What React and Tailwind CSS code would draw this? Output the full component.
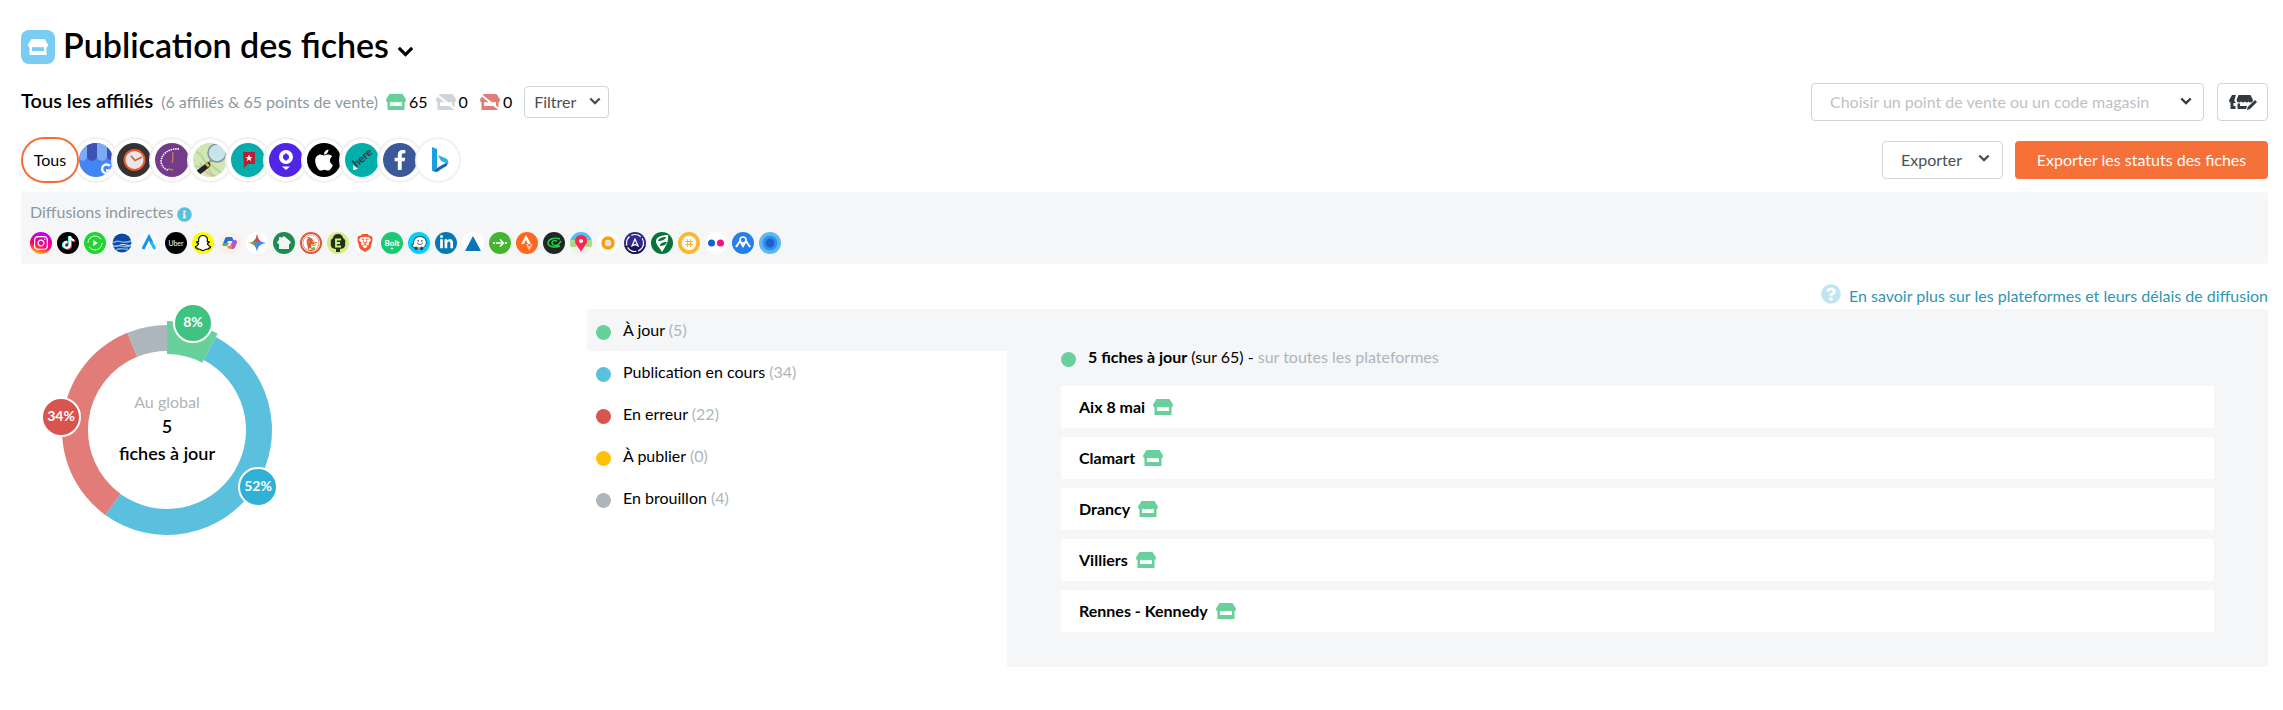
import React, { useState } from 'react';
import {
  FaApple,
  FaFacebookF,
  FaInfoCircle,
  FaInstagram,
  FaLinkedinIn,
  FaQuestionCircle,
  FaSnapchatGhost,
  FaTiktok,
  FaWaze,
} from 'react-icons/fa';
import { SiBrave, SiDuckduckgo } from 'react-icons/si';

const STATUSES = [
  { id: 'live', label: 'À jour', count: 5, dot: 'bg-[#68d09b]' },
  { id: 'pending', label: 'Publication en cours', count: 34, dot: 'bg-[#5bc0de]' },
  { id: 'error', label: 'En erreur', count: 22, dot: 'bg-[#d9534f]' },
  { id: 'todo', label: 'À publier', count: 0, dot: 'bg-[#ffc107]' },
  { id: 'draft', label: 'En brouillon', count: 4, dot: 'bg-[#adb5bd]' },
];

const STORES = ['Aix 8 mai', 'Clamart', 'Drancy', 'Villiers', 'Rennes - Kennedy'];

const SLICES = [
  { value: 34, start: 5, color: '#5bc0de' },
  { value: 22, start: 39, color: '#e27c79' },
  { value: 4, start: 61, color: '#adb5bd' },
  { value: 5, start: 0, color: '#68d09b', active: true },
];

const BADGES = [
  { label: '8%', x: 156, y: 22, color: '#3fc380' },
  { label: '52%', x: 221, y: 186, color: '#31b0d5' },
  { label: '34%', x: 24, y: 116, color: '#d9534f' },
];

function Chevron({ className }) {
  return (
    <svg viewBox="0 0 14 9" className={className} fill="none" stroke="currentColor" strokeWidth="2.6" aria-hidden="true">
      <path d="M1.500 1.500 7 7l5.500-5.500" />
    </svg>
  );
}

function ShopIcon({ className, off }) {
  return (
    <svg viewBox="0 0 20 16" className={className} fill="currentColor" aria-hidden="true">
      <path d="M3.500 0h13L20 5.600c0 1.600-.7 2.500-1.500 2.900V16h-17V8.500C.7 8.100 0 7.200 0 5.600zM4 8.600V12h12V8.600l-1.500-.9-1.500.9-1.500-.9-1.500.9-1.500-.9L7 8.600l-1.500-.9z" fillRule="evenodd" />
      {off && <path d="M0 0 20 16" stroke="#fff" strokeWidth="2" />}
    </svg>
  );
}

function ShopEditIcon() {
  return (
    <svg viewBox="0 0 28 15" className="h-[15px] w-7" fill="currentColor" aria-hidden="true">
      <path d="M3 0h4L5.500 4.500c-.3 1.400.2 2.200 1 2.600v1H4.500V11h2v3h-5V7.500C.3 7.100-.2 6 .2 5z" />
      <path d="M9.500 0h12l2.300 4.500c.4 1.600-.4 3-2 3-1 0-1.600-.4-2.100-1-1 1.300-2.700 1.300-3.700 0-1 1.300-2.700 1.300-3.700 0-1.200 1.500-5.300 1.300-4.600-2z" />
      <path d="M8.500 8.500H11V11h7l-1 3H8.500zM26 5l2 2-7 7-3 1 .7-3z" />
    </svg>
  );
}

const PLATFORMS = [
  {
    name: 'Google Business Profile',
    art: (
      <>
        <path fill="#4285f4" d="M0 0h34v34H0z" />
        <path fill="#7baaf7" d="M0 0h8v13a4.500 4.500 0 0 1-8 3zM18 0h10v13a5 5 0 0 1-10 0z" />
        <path fill="#3f51b5" d="M8 0h10v13a5 5 0 0 1-10 0zM28 0h6v17a4.500 4.500 0 0 1-6-4z" />
        <path d="M31 23a4.500 4.500 0 1 0 .8 4.500H27" fill="none" stroke="#fff" strokeWidth="2.400" />
      </>
    ),
  },
  {
    name: 'Horaires',
    art: (
      <>
        <path fill="#333" d="M0 0h34v34H0z" />
        <circle cx="17.500" cy="17" r="10" fill="#e6e9eb" stroke="#f0552b" strokeWidth="2" />
        <path d="m14 13 4 4.500 7-3.500" fill="none" stroke="#e4572e" strokeWidth="1.600" />
      </>
    ),
  },
  {
    name: 'Petit Futé',
    art: (
      <>
        <path fill="#743b8b" d="M0 0h34v34H0z" />
        <path d="M24 6C14 5 6 11 6 19c1 4 3 7 7 8" fill="none" stroke="#fff" strokeWidth="1.600" strokeDasharray="1.500 .8" />
        <path d="M18 9c-1 4 1 7-1 11M13 26l5 1" fill="none" stroke="#c3844d" strokeWidth="1.300" />
      </>
    ),
  },
  {
    name: 'OpenStreetMap',
    art: (
      <>
        <path fill="#cfe6b5" d="M0 0h34v34H0z" />
        <path d="M3 9c7 1 5 7 10 10s9 5 17 13M0 23l15 2 5 9M4 32 24 14" fill="none" stroke="#b8d69a" strokeWidth="2" />
        <path d="m7 20 7 10 10 4" fill="none" stroke="#e4b0a0" strokeWidth="1.500" />
        <circle cx="24" cy="10" r="9" fill="#c6e4e9" stroke="#84949b" strokeWidth="1.500" />
        <path d="M18 17 14 22" stroke="#8a9399" strokeWidth="2" />
        <path d="m15 22-9 7" stroke="#222" strokeWidth="5" strokeLinecap="round" />
        <path d="m15.500 21-2 2" stroke="#d9ba45" strokeWidth="4" />
      </>
    ),
  },
  {
    name: 'Mappy',
    art: (
      <>
        <path fill="#05adad" d="M0 0h34v34H0z" />
        <path fill="#b52033" d="M12 9h12v12h-7l-4 4z" />
        <path fill="#fff" d="m18 11.500 1 2.500h2.500l-2 1.600.8 2.600-2.300-1.600-2.300 1.600.8-2.600-2-1.600H17z" />
      </>
    ),
  },
  {
    name: 'GoWork',
    art: (
      <>
        <path fill="#5125e8" d="M0 0h34v34H0z" />
        <circle cx="17" cy="14" r="5" fill="none" stroke="#fff" strokeWidth="4" />
        <path d="M17 10.500v7" stroke="#5125e8" strokeWidth="2" />
        <path d="M13 23.500h8l-4 3.500z" fill="#fff" />
      </>
    ),
  },
  {
    name: 'Apple',
    art: (
      <>
        <path d="M0 0h34v34H0z" />
        <FaApple x="5" y="5" size="24" color="#fff" />
      </>
    ),
  },
  {
    name: 'Here',
    art: (
      <>
        <path fill="#00afaa" d="M0 0h34v34H0z" />
        <path fill="#fff" d="m8 22 5 4-5 1z" />
        <text x="10" y="24" transform="rotate(-42 12 22)" fill="#383c45" fontFamily="Lato, sans-serif" fontWeight="900" fontSize="11">
          here
        </text>
      </>
    ),
  },
  {
    name: 'Facebook',
    art: (
      <>
        <path fill="#3b5998" d="M0 0h34v34H0z" />
        <FaFacebookF x="7" y="7" size="20" color="#fff" />
      </>
    ),
  },
  {
    name: 'Bing',
    art: (
      <>
        <path fill="#fff" d="M0 0h34v34H0z" />
        <path fill="#1ba1e2" d="m11 4 5 2v19l-5 3z" />
        <path fill="#1668b8" d="m11 28 5-3 5-3 6-3c0 3-2 5-5 6l-6 4z" />
        <path fill="#2bb3d8" d="m17 12 7 3c3 1 4 4 3 6l-7-3z" />
      </>
    ),
  },
];

const INDIRECT = [
  {
    name: 'Instagram',
    art: (
      <>
        <defs>
          <linearGradient id="insta" x1="0.300" y1="1" x2="0.600" y2="0">
            <stop offset="0" stopColor="#ffc300" />
            <stop offset=".4" stopColor="#ff0069" />
            <stop offset="1" stopColor="#b900f5" />
          </linearGradient>
        </defs>
        <path fill="url(#insta)" d="M0 0h22v22H0z" />
        <FaInstagram x="3" y="3" size="16" color="#fff" />
      </>
    ),
  },
  {
    name: 'TikTok',
    art: (
      <>
        <path d="M0 0h22v22H0z" />
        <FaTiktok x="4" y="4" size="13" color="#25f4ee" />
        <FaTiktok x="6" y="5" size="13" color="#fe2c55" />
        <FaTiktok x="5" y="4" size="13" color="#fff" />
      </>
    ),
  },
  {
    name: 'Lecture',
    art: (
      <>
        <path fill="#20d52d" d="M0 0h22v22H0z" />
        <circle cx="11" cy="11" r="7" fill="none" stroke="#fff" strokeWidth="1" strokeDasharray="18 4" />
        <path fill="#fff" d="m9 8 5 3-5 3z" />
      </>
    ),
  },
  {
    name: 'Amazone Maps',
    art: (
      <>
        <path fill="#fff" d="M0 0h22v22H0z" />
        <circle cx="11" cy="11" r="9.500" fill="#1147a0" />
        <path fill="#fff" d="M1 13c5 2 8-1 11-1s5 2 9 0v1c-4 2-6 0-9 0s-6 3-11 1z" />
        <path d="M2 11c5-5 9 2 18-2M3 15c5-4 8 2 16-1M5 18c4-3 8 0 12-1" fill="none" stroke="#76b5ea" strokeWidth="1.400" />
      </>
    ),
  },
  {
    name: 'Alexa',
    art: (
      <>
        <path fill="#f8f9fa" d="M0 0h22v22H0z" />
        <path d="M5 17 11 5l3 6" fill="none" stroke="#1592ea" strokeWidth="3" />
        <path d="m13 10 4 7" stroke="#17bdf3" strokeWidth="3" />
      </>
    ),
  },
  {
    name: 'Uber',
    art: (
      <>
        <path d="M0 0h22v22H0z" />
        <text x="11" y="14" textAnchor="middle" fill="#fff" fontFamily="Lato, sans-serif" fontSize="7">
          Uber
        </text>
      </>
    ),
  },
  {
    name: 'Snapchat',
    art: (
      <>
        <path fill="#fffc00" d="M0 0h22v22H0z" />
        <FaSnapchatGhost x="3" y="3" size="16" color="#fff" stroke="#000" strokeWidth="36" />
      </>
    ),
  },
  {
    name: 'Copilot',
    art: (
      <>
        <path fill="#faf0ea" d="M0 0h22v22H0z" />
        <path fill="#2870d8" d="M8 5h5l2 4H9l-2 5H5c-2 0-1-3 0-5s1-4 3-4z" />
        <path fill="#4bb864" d="M4 11h6l-2 3H5c-1 0-2-1-1-3z" />
        <path fill="#b057cf" d="M14 8h2c3 0 2 3 1 5s-1 4-4 4l-3-1z" />
        <path fill="#f4813f" d="M8 14h3l3-3-1 4c-1 2-3 2-4 1z" />
      </>
    ),
  },
  {
    name: 'Gemini',
    art: (
      <>
        <defs>
          <linearGradient id="gemini" x1="0" y1="0" x2="1" y2="0">
            <stop offset="0" stopColor="#f6b821" />
            <stop offset=".35" stopColor="#5aa06a" />
            <stop offset=".55" stopColor="#4286f5" />
            <stop offset="1" stopColor="#4286f5" />
          </linearGradient>
        </defs>
        <path fill="#fff" d="M0 0h22v22H0z" />
        <path fill="url(#gemini)" d="M11 2c1 6 3 8 9 9-6 1-8 3-9 9-1-6-3-8-9-9 6-1 8-3 9-9z" />
        <path fill="#ea4335" d="M11 2c.7 3.600 1.600 5.600 3 7l-5 1-1.500-.6C9.600 8.200 10.400 6 11 2z" />
      </>
    ),
  },
  {
    name: 'Maison',
    art: (
      <>
        <path fill="#1f8a53" d="M0 0h22v22H0z" />
        <path fill="#f4f5f7" d="m11 4 7 6-1 2h-1v5H6v-5H5l-1-2 2-2V5h2v1z" />
      </>
    ),
  },
  {
    name: 'DuckDuckGo',
    art: (
      <>
        <path fill="#de5833" d="M0 0h22v22H0z" />
        <SiDuckduckgo x="2" y="2" size="18" color="#fff" />
        <path fill="#65bc46" d="m11 16 4-1v3l-4-1z" />
        <path fill="#fdd20a" d="M11 12h4l-1 1h-3z" />
      </>
    ),
  },
  {
    name: 'Ecosia',
    art: (
      <>
        <path fill="#d7eb80" d="M0 0h22v22H0z" />
        <path fill="#1f3318" d="M11 2c3 0 5 2 5 4 2 1 3 3 2 5 1 3-1 6-5 6v3H9v-3c-4 0-6-3-5-6-1-2 0-4 2-5 0-2 2-4 5-4z" />
        <path d="M14 7.500H9v7h5M9 11h4" fill="none" stroke="#d7eb80" strokeWidth="1.800" />
      </>
    ),
  },
  {
    name: 'Brave',
    art: (
      <>
        <path fill="#fff" d="M0 0h22v22H0z" />
        <SiBrave x="2" y="2" size="18" color="#fb542b" />
      </>
    ),
  },
  {
    name: 'Bolt',
    art: (
      <>
        <path fill="#1dc872" d="M0 0h22v22H0z" />
        <text x="11" y="14" textAnchor="middle" fill="#fff" fontFamily="Lato, sans-serif" fontWeight="900" fontSize="8">
          Bolt
        </text>
        <circle cx="11" cy="16.500" r="1" fill="#fff" />
      </>
    ),
  },
  {
    name: 'Waze',
    art: (
      <>
        <path fill="#05d0fc" d="M0 0h22v22H0z" />
        <path fill="#fff" d="M12 5c4 0 6 3 6 6s-3 6-6 6c-4 0-7-1-8-4 2 0 2-1 2-3 0-3 3-5 6-5z" />
        <FaWaze x="3" y="3" size="16" color="#28404d" />
      </>
    ),
  },
  {
    name: 'LinkedIn',
    art: (
      <>
        <path fill="#0878b5" d="M0 0h22v22H0z" />
        <FaLinkedinIn x="4" y="3" size="15" color="#fff" />
      </>
    ),
  },
  {
    name: 'Navigation',
    art: (
      <>
        <path fill="#fff" d="M0 0h22v22H0z" />
        <path fill="#0875bd" d="m11 4 8 15H3z" />
      </>
    ),
  },
  {
    name: 'Citymapper',
    art: (
      <>
        <path fill="#43b52f" d="M0 0h22v22H0z" />
        <path d="M7 11h7M11 7.500l3.500 3.500-3.500 3.500" fill="none" stroke="#fff" strokeWidth="1.600" />
        <path fill="#fff" d="M4 10h2v2H4zM16 10h2v2h-2z" />
      </>
    ),
  },
  {
    name: 'Strava',
    art: (
      <>
        <path fill="#ff6820" d="M0 0h22v22H0z" />
        <path fill="#fff" d="m10 3 5 9h-3l-2-4-2 4H5z" />
        <path fill="#ffc19f" d="M10 12h2l1 3 2-3h2l-4 7z" />
      </>
    ),
  },
  {
    name: 'Careem',
    art: (
      <>
        <path fill="#222725" d="M0 0h22v22H0z" />
        <path d="M17 7c-5-2-12 0-12 4s7 5 12 3M14 9c-3-1-5 0-5 2s3 3 6 2l3-4" fill="none" stroke="#2bd34b" strokeWidth="1.400" />
      </>
    ),
  },
  {
    name: 'Plans',
    art: (
      <>
        <path fill="#f1eee8" d="M0 0h22v22H0z" />
        <path fill="#54bdf5" d="M0 0h22v8H0z" />
        <path fill="#a9da86" d="M0 8h6v7H0zM16 8h6v7h-6z" />
        <path fill="#fb2751" d="M11 3c4 0 6 3 6 6 0 4-4 6-6 11C9 15 5 13 5 9c0-3 2-6 6-6z" />
        <circle cx="11" cy="9" r="2" fill="#fff" />
      </>
    ),
  },
  {
    name: 'Magic Earth',
    art: (
      <>
        <path fill="#fff" d="M0 0h22v22H0z" />
        <circle cx="11" cy="11" r="5" fill="#e1e3e8" stroke="#faa008" strokeWidth="3.500" />
      </>
    ),
  },
  {
    name: 'Organic Nav',
    art: (
      <>
        <path fill="#30288a" d="M0 0h22v22H0z" />
        <path fill="#1b1658" d="M0 14h22v8H0z" />
        <circle cx="11" cy="11" r="8.500" fill="none" stroke="#fff" strokeWidth="1.200" strokeDasharray="10 2" />
        <path d="m11 7-3 7 3-1.500 3 1.500z" fill="none" stroke="#fff" strokeWidth="1.200" />
      </>
    ),
  },
  {
    name: 'HappyCow',
    art: (
      <>
        <path fill="#087238" d="M0 0h22v22H0z" />
        <path fill="#fff" d="M5 9c0-4 6-6 12-6 1 6-2 11-6 17-2-4-6-7-6-11z" />
        <path fill="#087238" d="M7 9c1-3 4-4 8-4-1 3-4 4-8 4zM9 14c0-3 3-4 7-4-1 3-4 4-7 4z" />
      </>
    ),
  },
  {
    name: 'What3',
    art: (
      <>
        <path fill="#fdb62f" d="M0 0h22v22H0z" />
        <circle cx="11" cy="11" r="7" fill="#fff" stroke="#fff" strokeWidth="1" strokeDasharray="1 1" />
        <path d="M9.500 7v8M12.500 7v8M7 9.500h8M7 12.500h8" stroke="#fdb62f" />
      </>
    ),
  },
  {
    name: 'Flickr',
    art: (
      <>
        <path fill="#fff" d="M0 0h22v22H0z" />
        <circle cx="6.500" cy="11" r="3.500" fill="#0d63dc" />
        <circle cx="15.500" cy="11" r="3.500" fill="#ff0a85" />
      </>
    ),
  },
  {
    name: 'Mapstr',
    art: (
      <>
        <path fill="#2580ec" d="M0 0h22v22H0z" />
        <path d="m4 15 4-6 3 5 3-5 4 6" fill="none" stroke="#fff" strokeWidth="2" />
        <circle cx="11" cy="8" r="3" fill="none" stroke="#fff" strokeWidth="1.500" />
      </>
    ),
  },
  {
    name: 'Cible',
    art: (
      <>
        <path fill="#5bb9f5" d="M0 0h22v22H0z" />
        <circle cx="11" cy="11" r="7.500" fill="#358ee9" />
        <circle cx="11" cy="11" r="4.500" fill="#1c62cc" />
      </>
    ),
  },
];

function point(value, radius) {
  const a = (value / 65) * Math.PI * 2;
  return `${130 + radius * Math.sin(a)} ${129 - radius * Math.cos(a)}`;
}

function arc({ start, value, active }) {
  const outer = active ? 109 : 105;
  const inner = active ? 76 : 79;
  const end = start + value;
  const large = value > 32 ? 1 : 0;
  return `M${point(start, outer)}A${outer} ${outer} 0 ${large} 1 ${point(end, outer)}L${point(end, inner)}A${inner} ${inner} 0 ${large} 0 ${point(start, inner)}Z`;
}

function Donut() {
  return (
    <svg viewBox="0 0 260 240" className="-mt-2 ml-4 h-60 w-[260px]" role="img" aria-label="Répartition des fiches">
      {SLICES.map((s) => (
        <path key={s.color} d={arc(s)} fill={s.color} />
      ))}
      <g textAnchor="middle">
        <text x="130" y="107" className="fill-[#adb5bd] text-base">Au global</text>
        <text x="130" y="132" className="text-lg font-semibold">5</text>
        <text x="130" y="159" className="text-lg font-semibold">fiches à jour</text>
        {BADGES.map((b) => (
          <g key={b.label}>
            <circle cx={b.x} cy={b.y} r="19" fill={b.color} stroke="#fff" strokeWidth="2" />
            <text x={b.x} y={b.y + 4} className="fill-white text-sm font-bold">{b.label}</text>
          </g>
        ))}
      </g>
    </svg>
  );
}

export default function App() {
  const [status, setStatus] = useState('live');

  return (
    <main className="bg-white pt-[30px] pr-[15px] pb-10 pl-[21px] font-[Lato,sans-serif] text-base text-black">
      <header className="flex h-[34px] items-center">
        <span className="flex size-[34px] items-center justify-center rounded-lg bg-[#79ccf2] text-white">
          <ShopIcon className="h-4 w-5" />
        </span>
        <h1 className="mb-1 ml-2 text-[34px] leading-none font-semibold">Publication des fiches</h1>
        <button type="button" aria-label="Changer de page" className="mt-2 ml-2">
          <Chevron className="h-[11px] w-[17px]" />
        </button>
      </header>

      <div className="mt-[19px] flex items-center justify-between">
        <div className="flex items-center">
          <h2 className="mb-1 text-xl leading-6 font-semibold">Tous les affiliés</h2>
          <span className="ml-2 text-[#8e979f]">(6 affiliés &amp; 65 points de vente)</span>
          <ShopIcon className="ml-2 h-4 w-5 text-[#68d09b]" />
          <span className="ml-[3px]">65</span>
          <ShopIcon off className="ml-2 h-4 w-5 text-[#ced4da]" />
          <span className="ml-[3px]">0</span>
          <ShopIcon off className="ml-3 h-4 w-5 text-[#e27c79]" />
          <span className="ml-[3px]">0</span>
          <div className="relative ml-3 text-[#495057]">
            <select aria-label="Filtrer" className="h-8 w-[85px] appearance-none rounded border border-[#ced4da] bg-white pl-[9px]">
              <option>Filtrer</option>
            </select>
            <Chevron className="pointer-events-none absolute top-[11px] right-2 h-2 w-3" />
          </div>
        </div>
        <div className="flex gap-[13px] text-[#343a40]">
          <div className="relative">
            <select aria-label="Point de vente" className="h-[38px] w-[393px] appearance-none rounded border border-[#ced4da] bg-white pl-[18px] text-[#bfc1c4]">
              <option>Choisir un point de vente ou un code magasin</option>
            </select>
            <Chevron className="pointer-events-none absolute top-[14px] right-3 h-2 w-3" />
          </div>
          <button type="button" aria-label="Modifier les points de vente" className="flex h-[38px] w-[51px] items-center justify-center rounded border border-[#ced4da]">
            <ShopEditIcon />
          </button>
        </div>
      </div>

      <div className="mt-4 flex items-center justify-between">
        <div className="flex">
          <button type="button" className="z-10 h-[46px] w-[58px] rounded-full border-2 border-[#f47038] bg-white">
            Tous
          </button>
          <div className="-ml-[6px] flex -space-x-2">
            {PLATFORMS.map((p) => (
              <button key={p.name} type="button" aria-label={p.name} className="flex size-[46px] items-center justify-center rounded-full border-2 border-[#f1f1f1] bg-white">
                <svg viewBox="0 0 34 34" className="size-[34px] shrink-0 rounded-full">{p.art}</svg>
              </button>
            ))}
          </div>
        </div>
        <div className="flex gap-3">
          <button type="button" aria-haspopup="menu" className="flex h-[38px] w-[121px] items-center justify-between rounded border border-[#ced4da] pr-3 pl-[18px] text-[#495057]">
            Exporter
            <Chevron className="mb-1 h-2 w-3" />
          </button>
          <button type="button" className="h-[38px] w-[253px] rounded bg-[#f67039] text-white">
            Exporter les statuts des fiches
          </button>
        </div>
      </div>

      <section className="mt-[9px] rounded bg-[#f4f6f8] px-[9px] pt-2 pb-[9px]">
        <div className="flex items-center gap-1 text-[#8e979f]">
          <h3 className="leading-6">Diffusions indirectes</h3>
          <FaInfoCircle className="mt-1 size-[15px] text-[#5bc0de]" />
        </div>
        <ul className="mt-2 flex gap-[5px]">
          {INDIRECT.map((p) => (
            <li key={p.name} title={p.name} className="h-[23px] w-[22px] shrink-0">
              <svg viewBox="0 0 22 22" className="size-[22px] rounded-full">{p.art}</svg>
            </li>
          ))}
        </ul>
      </section>

      <div className="mt-5 flex h-5 items-center justify-end">
        <FaQuestionCircle className="size-5 text-[#bfe5f2]" />
        <a href="#delais" className="mt-1 ml-2 text-[#2f96b4]">
          En savoir plus sur les plateformes et leurs délais de diffusion
        </a>
      </div>

      <div className="mt-[5px] grid grid-cols-[566fr_420fr_1261fr]">
        <Donut />

        <ul>
          {STATUSES.map((s) => (
            <li key={s.id}>
              <button
                type="button"
                onClick={() => setStatus(s.id)}
                className={`flex h-[42px] w-full items-center rounded-l pl-[9px] ${status === s.id ? 'bg-[#f4f6f8]' : ''}`}
              >
                <span className={`mt-1 size-[15px] rounded-full ${s.dot}`} />
                <span className="ml-3">
                  {s.label} <span className="text-[#adb5bd]">({s.count})</span>
                </span>
              </button>
            </li>
          ))}
        </ul>

        <section className="rounded-r bg-[#f4f6f8] px-[54px] pt-9 pb-[35px]">
          <div className="flex items-center">
            <span className="mt-1 size-[15px] rounded-full bg-[#68d09b]" />
            <p className="ml-3">
              <b>5 fiches à jour</b> (sur 65) - <span className="text-[#adb5bd]">sur toutes les plateformes</span>
            </p>
          </div>
          <ul className="mt-[17px] space-y-[9px]">
            {STORES.map((name) => (
              <li key={name} className="flex h-[42px] items-center bg-white px-[18px] font-bold">
                {name}
                <ShopIcon className="ml-2 h-4 w-5 text-[#68d09b]" />
              </li>
            ))}
          </ul>
        </section>
      </div>
    </main>
  );
}
